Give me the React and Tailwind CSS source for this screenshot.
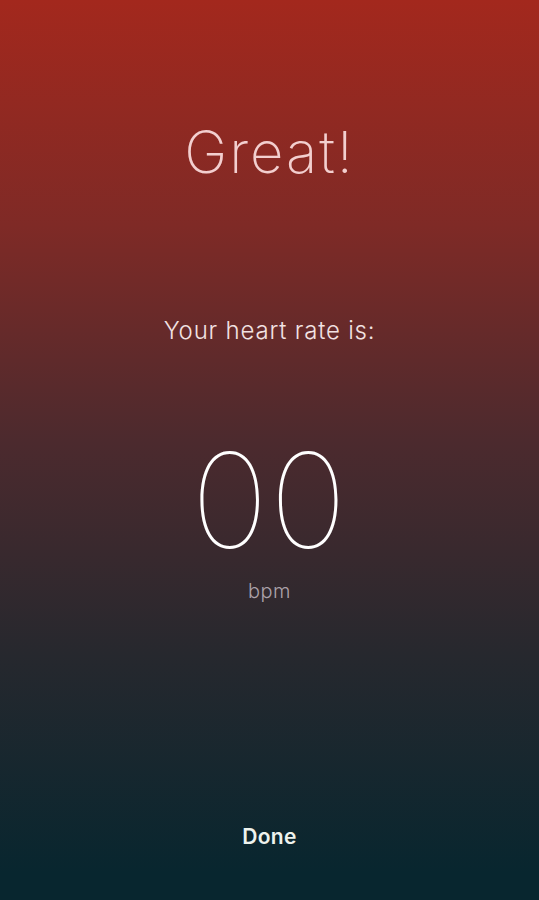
export default function App() {
  return (
    <div
      className="flex h-[900px] w-full flex-col items-center bg-[linear-gradient(to_bottom,#a3281d_0%,#7f2a26_25%,#4c2a2e_49%,#26282e_73%,#08262f_97%)] text-center"
      style={{ fontFamily: "Inter, 'Noto Sans', sans-serif" }}
    >
      <h1 className="mt-[112px] text-[58px] leading-[80px] font-extralight tracking-[2px] text-[#f3cfcf]">
        Great!
      </h1>
      <p className="mt-[123px] text-[24px] leading-[32px] font-light tracking-[0.8px] text-[#f2e2e2]">
        Your heart rate is:
      </p>
      <div className="mt-[94px] text-[131px] leading-[120px] font-thin tracking-[1px] text-white">00</div>
      <div className="mt-[16px] text-[20px] leading-[28px] font-light tracking-[0.5px] text-[#aca2aa]">bpm</div>
      <button className="mt-auto mb-[49px] text-[21px] leading-[28px] font-semibold tracking-[0.3px] text-[#eef3ee]">
        Done
      </button>
    </div>
  );
}
